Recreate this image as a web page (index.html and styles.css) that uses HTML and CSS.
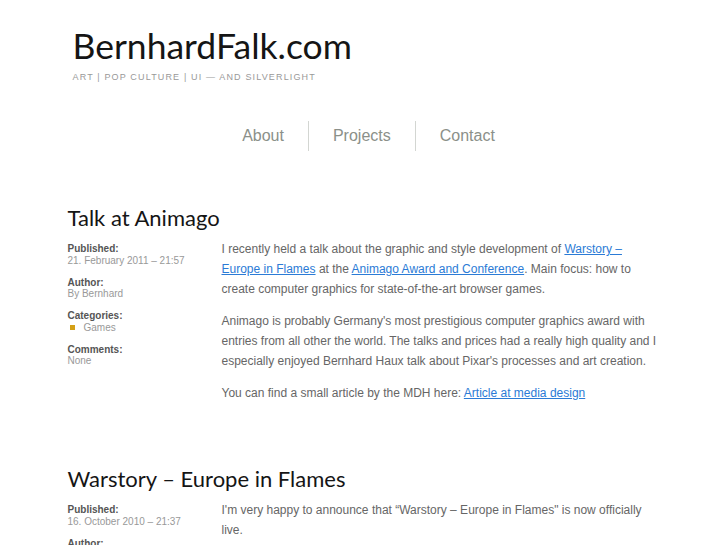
FILE: index.html
```
<!DOCTYPE html>
<html>
<head>
<meta charset="utf-8">
<link rel="stylesheet" href="styles.css">
</head>
<body>
<div class="page">
  <header class="header">
    <h1 class="site-title">BernhardFalk.com</h1>
    <p class="tagline">ART | POP CULTURE | UI — AND SILVERLIGHT</p>
  </header>
  <nav class="nav">
    <a href="#" class="nav-item">About</a>
    <span class="nav-sep"></span>
    <a href="#" class="nav-item">Projects</a>
    <span class="nav-sep"></span>
    <a href="#" class="nav-item">Contact</a>
  </nav>

  <article class="post">
    <h2 class="post-title">Talk at Animago</h2>
    <div class="post-body">
      <aside class="meta">
        <div class="meta-group"><div class="meta-label">Published:</div><div class="meta-value">21. February 2011 – 21:57</div></div>
        <div class="meta-group"><div class="meta-label">Author:</div><div class="meta-value">By Bernhard</div></div>
        <div class="meta-group"><div class="meta-label">Categories:</div><div class="meta-value cat"><span class="bullet"></span>Games</div></div>
        <div class="meta-group"><div class="meta-label">Comments:</div><div class="meta-value">None</div></div>
      </aside>
      <div class="content">
        <p>I recently held a talk about the graphic and style development of <a href="#">Warstory – Europe in Flames</a> at the <a href="#">Animago Award and Conference</a>. Main focus: how to create computer graphics for state-of-the-art browser games.</p>
        <p>Animago is probably Germany's most prestigious computer graphics award with entries from all other the world. The talks and prices had a really high quality and I especially enjoyed Bernhard Haux talk about Pixar's processes and art creation.</p>
        <p>You can find a small article by the MDH here: <a href="#">Article at media design</a></p>
      </div>
    </div>
  </article>

  <article class="post">
    <h2 class="post-title">Warstory – Europe in Flames</h2>
    <div class="post-body">
      <aside class="meta">
        <div class="meta-group"><div class="meta-label">Published:</div><div class="meta-value">16. October 2010 – 21:37</div></div>
        <div class="meta-group"><div class="meta-label">Author:</div><div class="meta-value">By Bernhard</div></div>
      </aside>
      <div class="content">
        <p>I'm very happy to announce that “Warstory – Europe in Flames" is now officially live.</p>
      </div>
    </div>
  </article>
</div>
</body>
</html>
```
FILE: styles.css
```
html, body {
  margin: 0;
  padding: 0;
  background: #fff;
}
body {
  font-family: "Liberation Sans", Arial, sans-serif;
  color: #666;
}
.page {
  width: 592px;
  margin: 0 auto;
}
.header {
  padding: 28px 0 0 5px;
}
.site-title {
  margin: 0;
  font-family: Lato, "Liberation Sans", sans-serif;
  font-weight: 400;
  font-size: 35.5px;
  line-height: 36px;
  color: #151515;
}
.tagline {
  margin: 7px 0 0 0;
  font-size: 9px;
  letter-spacing: 1.15px;
  color: #999;
  line-height: 12px;
}
.nav {
  display: flex;
  justify-content: center;
  align-items: center;
  margin-top: 38px;
  padding-left: 10px;
  height: 30px;
}
.nav-item {
  font-size: 16px;
  color: #8b9089;
  text-decoration: none;
  padding: 0 24px;
}
.nav-sep {
  width: 1px;
  height: 30px;
  background: #d3d6d2;
}
.post {
  margin-top: 54px;
}
.post + .post {
  margin-top: 51px;
}
.post-title {
  margin: 0;
  font-family: Lato, "Liberation Sans", sans-serif;
  font-weight: 400;
  font-size: 22px;
  line-height: 26px;
  color: #151515;
}
.post-body {
  display: flex;
  margin-top: 12px;
}
.meta {
  width: 154px;
  flex-shrink: 0;
  font-size: 10px;
  line-height: 11.5px;
}
.meta-group {
  margin-bottom: 10.5px;
}
.meta-label {
  font-weight: bold;
  color: #555;
}
.meta-value {
  color: #999;
}
.cat {
  display: flex;
  align-items: center;
}
.bullet {
  width: 5px;
  height: 5px;
  background: #d4a017;
  margin: 0 9px 0 2px;
}
.content {
  flex: 1;
  font-size: 12px;
  line-height: 20px;
  color: #666;
  margin-top: -4px;
}
.content p {
  margin: 0 0 12px 0;
}
.content a {
  color: #2b7bd6;
}
```
